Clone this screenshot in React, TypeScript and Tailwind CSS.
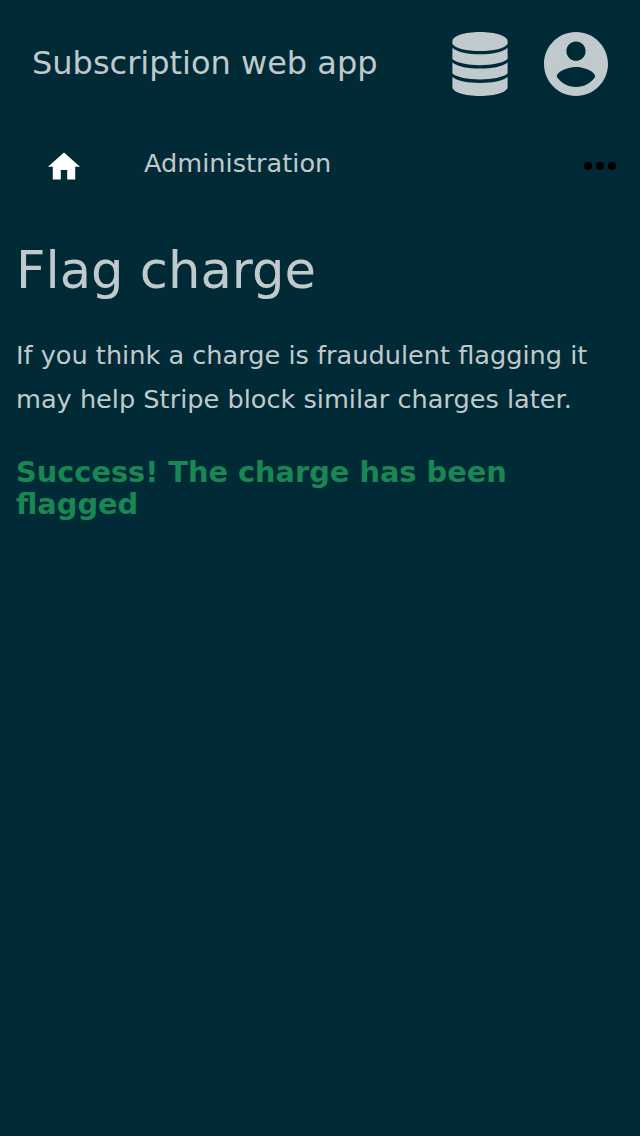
import React from "react";

function DatabaseIcon() {
  return (
    <svg viewBox="0 0 56 64" className="h-16 w-14" fill="#c0c9cc">
      <path d="M.4 9.300C.4 3.800 12.700 0 28 0s27.600 3.800 27.600 9.300V12C52.500 16.500 41.500 19 28 19S3.500 16.500 .4 12z" />
      <path d="M.4 15.700C6 20.500 16 22.200 28 22.200s22-1.700 27.600-6.500V27C51 31 40 33.200 28 33.200S5 31 .4 27z" />
      <path d="M.4 30.600C6 35 16 36.600 28 36.600s22-1.600 27.600-6V41.500C51 45.500 40 47.400 28 47.400S5 45.500 .4 41.500z" />
      <path d="M.4 45C6 49.400 16 50.900 28 50.900s22-1.500 27.600-5.900V55C55.600 60.200 43 64 28 64S.4 60.200 .4 55z" />
    </svg>
  );
}

function AccountIcon() {
  return (
    <svg viewBox="2 2 20 20" className="size-16" fill="#c0c9cc">
      <path d="M12 2C6.480 2 2 6.480 2 12s4.480 10 10 10 10-4.480 10-10S17.520 2 12 2zm0 3c1.660 0 3 1.340 3 3s-1.340 3-3 3-3-1.340-3-3 1.340-3 3-3zm0 14.200c-2.500 0-4.710-1.280-6-3.220.03-1.990 4-3.080 6-3.080 1.990 0 5.970 1.090 6 3.080-1.290 1.940-3.500 3.220-6 3.220z" />
    </svg>
  );
}

export default function App() {
  return (
    <div className="min-h-[1136px] w-full bg-[#002b36] font-['DejaVu_Sans',sans-serif] text-[#c0c9cc]">
      <header className="flex h-32 items-center justify-between px-8">
        <h1 className="pb-0.5 text-[32px] leading-10">Subscription web app</h1>
        <div className="flex gap-9">
          <DatabaseIcon />
          <AccountIcon />
        </div>
      </header>
      <nav className="flex h-[76px] items-center pr-6 pl-12">
        <svg viewBox="2 1.5 20 20" className="size-8" fill="#fff">
          <path d="M10 20v-6h4v6h5v-8h3L12 3 2 12h3v8z" />
        </svg>
        <span className="ml-16 pb-1.5 text-[25.600px] leading-8">Administration</span>
        <svg viewBox="0 0 32 8" className="ml-auto h-2 w-8" fill="#000">
          <circle cx="4" cy="4" r="4" />
          <circle cx="16" cy="4" r="4" />
          <circle cx="28" cy="4" r="4" />
        </svg>
      </nav>
      <main className="px-4 pt-9">
        <h2 className="text-[51.200px] leading-[60px]">Flag charge</h2>
        <p className="mt-[33px] text-[25.600px] leading-[44px]">
          If you think a charge is fraudulent flagging it may help Stripe block similar charges later.
        </p>
        <p className="mt-[35px] text-[28.800px] leading-8 font-bold text-[#198754]">
          Success! The charge has been flagged
        </p>
      </main>
    </div>
  );
}
